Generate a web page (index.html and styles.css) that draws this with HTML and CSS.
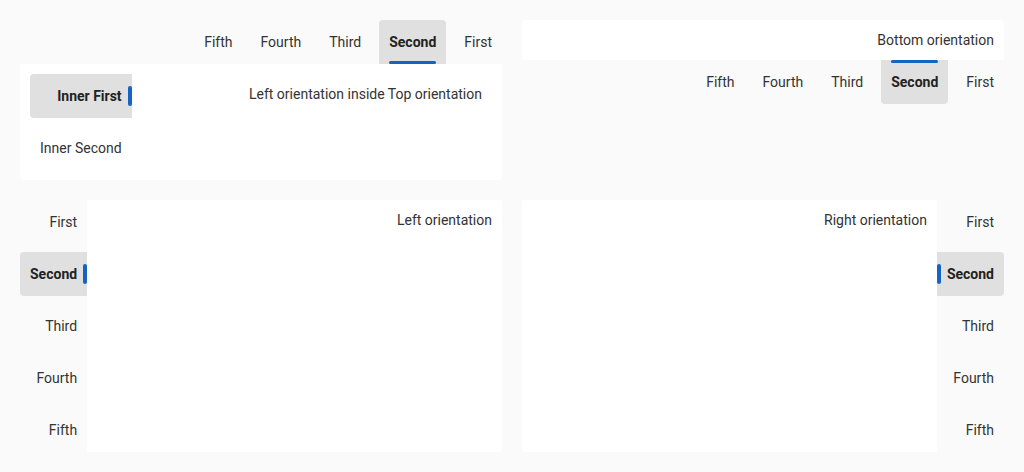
FILE: index.html
```html
<!DOCTYPE html>
<html>
<head>
<meta charset="utf-8">
<link rel="stylesheet" href="styles.css">
</head>
<body>
<div class="grid">
  <div class="tabs tabs-top">
    <div class="tablist row">
      <div class="tab">Fifth</div>
      <div class="tab">Fourth</div>
      <div class="tab">Third</div>
      <div class="tab selected">Second</div>
      <div class="tab">First</div>
    </div>
    <div class="panel panel-top">
      <div class="tabs tabs-left">
        <div class="tablist col">
          <div class="tab selected">Inner First</div>
          <div class="tab">Inner Second</div>
        </div>
        <div class="inner-panel">Left orientation inside Top orientation</div>
      </div>
    </div>
  </div>

  <div class="tabs tabs-bottom">
    <div class="panel panel-bottom">Bottom orientation</div>
    <div class="tablist row">
      <div class="tab">Fifth</div>
      <div class="tab">Fourth</div>
      <div class="tab">Third</div>
      <div class="tab selected">Second</div>
      <div class="tab">First</div>
    </div>
  </div>

  <div class="tabs tabs-left">
    <div class="tablist col">
      <div class="tab">First</div>
      <div class="tab selected">Second</div>
      <div class="tab">Third</div>
      <div class="tab">Fourth</div>
      <div class="tab">Fifth</div>
    </div>
    <div class="panel panel-left">Left orientation</div>
  </div>

  <div class="tabs tabs-right">
    <div class="panel panel-right">Right orientation</div>
    <div class="tablist col">
      <div class="tab">First</div>
      <div class="tab selected">Second</div>
      <div class="tab">Third</div>
      <div class="tab">Fourth</div>
      <div class="tab">Fifth</div>
    </div>
  </div>
</div>
</body>
</html>
```

FILE: styles.css
```css
html, body {
  margin: 0;
  padding: 0;
  background: #fafafa;
}
body {
  font-family: Roboto, "Liberation Sans", sans-serif;
  font-size: 14px;
  line-height: 20px;
  color: #333333;
  padding: 20px;
}
.grid {
  display: grid;
  grid-template-columns: 1fr 1fr;
  gap: 20px;
  align-items: start;
}
.tabs {
  display: flex;
}
.tabs-top, .tabs-bottom {
  flex-direction: column;
}
.tabs-left, .tabs-right {
  flex-direction: row;
  align-items: stretch;
}
.tablist {
  display: flex;
  gap: 8px;
}
.tablist.row {
  justify-content: flex-end;
}
.tablist.col {
  flex-direction: column;
  align-items: stretch;
}
.tab {
  position: relative;
  height: 44px;
  padding: 0 10px;
  display: flex;
  align-items: center;
  justify-content: flex-end;
  white-space: nowrap;
  color: #333333;
}
.tab.selected {
  background: #e0e0e0;
  font-weight: 700;
  color: #222222;
}
.tab.selected::after {
  content: "";
  position: absolute;
  background: #1565c0;
  border-radius: 2px;
}
.tabs-top > .tablist .tab.selected {
  border-radius: 4px 4px 0 0;
}
.tabs-top > .tablist .tab.selected::after {
  left: 10px;
  right: 10px;
  bottom: 0;
  height: 3px;
}
.tabs-bottom > .tablist .tab.selected {
  border-radius: 0 0 4px 4px;
}
.tabs-bottom > .tablist .tab.selected::after {
  left: 10px;
  right: 10px;
  top: 0;
  height: 3px;
}
.tabs-left > .tablist .tab.selected {
  border-radius: 4px 0 0 4px;
}
.tabs-left > .tablist .tab.selected::after {
  right: 0;
  top: 12px;
  width: 4px;
  height: 20px;
}
.tabs-right > .tablist .tab.selected {
  border-radius: 0 4px 4px 0;
}
.tabs-right > .tablist .tab.selected::after {
  left: 0;
  top: 12px;
  width: 4px;
  height: 20px;
}
.panel {
  background: #ffffff;
  padding: 10px;
  text-align: right;
}
.panel-top {
  border-radius: 0 0 4px 4px;
}
.panel-bottom {
  border-radius: 4px 4px 0 0;
}
.panel-left {
  flex: 1;
  border-radius: 0 4px 4px 0;
}
.panel-right {
  flex: 1;
  border-radius: 4px 0 0 4px;
}
.inner-panel {
  flex: 1;
  padding: 10px;
  text-align: right;
}
```
